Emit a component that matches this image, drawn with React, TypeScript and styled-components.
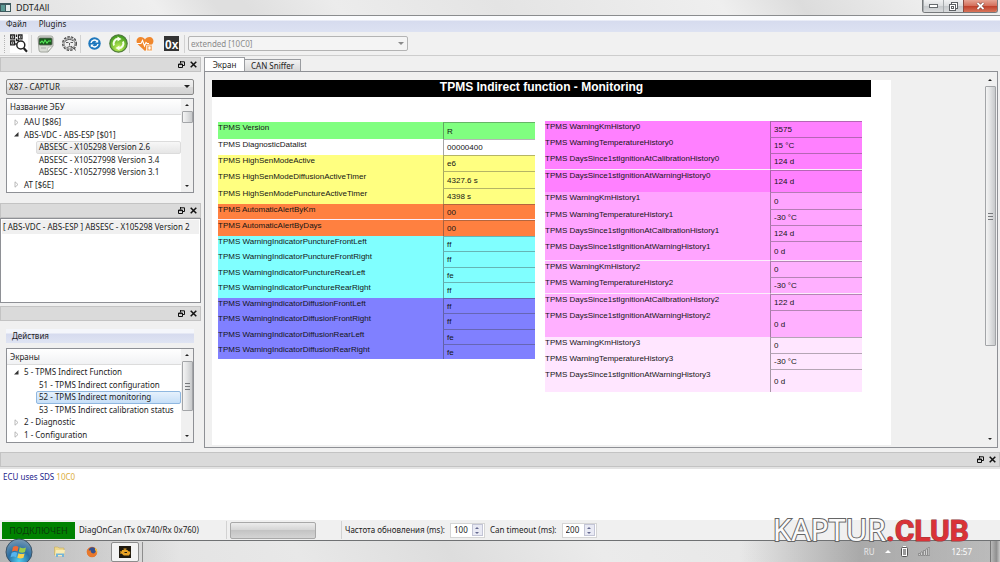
import React from "react";
import styled, { createGlobalStyle, css } from "styled-components";

const Global = createGlobalStyle`
  * { box-sizing: border-box; }
  body { margin: 0; background: #f0f0f0; }
  body, button, input, select {
    font-family: "Noto Sans", "Open Sans", sans-serif;
    font-size: 8px;
    line-height: 12px;
    color: #1c1c1c;
  }
  button { background: none; border: 0; padding: 0; margin: 0; }
  ul, h1 { margin: 0; padding: 0; list-style: none; }
`;

const Window = styled.div`
  position: relative;
  display: flex;
  flex-direction: column;
  min-height: 100vh;
  overflow: hidden;
`;

const TitleBar = styled.header`
  display: flex;
  align-items: center;
  gap: 5px;
  height: 16px;
  font-size: 9px;
  border-bottom: 1px solid #8a8c8e;
  background: linear-gradient(55deg, #e4e4e4 0 4%, #efefef 16%, #dfdfdf 22% 25%, #ececec 34%, #e4e4e4 50%, #efefef 72%, #dcdcdc 80%, #ededed 92%);
`;

const CaptionButtons = styled.div`
  display: flex;
  align-self: flex-start;
  margin: 0 2px 0 auto;
  height: 13px;
  border: 1px solid #76797c;
  border-top: 0;
  border-radius: 0 0 3px 3px;
  overflow: hidden;
`;

const CaptionButton = styled.button<{ $close?: boolean }>`
  display: flex;
  align-items: center;
  justify-content: center;
  width: ${(p) => (p.$close ? 34 : 20)}px;
  border-left: ${(p) => (p.$close ? "1px solid #8b4a40" : "1px solid #a7abae")};
  background: ${(p) =>
    p.$close
      ? "linear-gradient(#e6a494, #d4705c 48%, #c0402b 52%, #d8745a)"
      : "linear-gradient(#f0f1f2, #dcdee0 48%, #c6c9cc 52%, #d9dbdd)"};
`;

const MenuBar = styled.nav`
  display: flex;
  gap: 12px;
  height: 16px;
  padding: 1px 6px;
  background: linear-gradient(#fbfcfe 0 4px, #d6dbee 5px, #dde2f2);
`;

const ToolBar = styled.div`
  display: flex;
  align-items: center;
  height: 24px;
  padding: 0 4px;
  border-bottom: 1px solid #cdcdcd;
  background: #f1f1f1;
`;

const Grip = styled.span`
  width: 2px;
  height: 18px;
  border-left: 1px dotted #b5b5b5;
`;

const Separator = styled.span`
  width: 1px;
  height: 18px;
  background: #d2d2d2;
`;

const ToolButton = styled.button<{ $w: number }>`
  display: flex;
  align-items: center;
  justify-content: center;
  width: ${(p) => p.$w}px;
  height: 22px;
`;

const ComboWrap = styled.div<{ $w?: number }>`
  position: relative;
  width: ${(p) => (p.$w ? `${p.$w}px` : "100%")};
  ${(p) => p.$w && css`margin-left: 3px;`}
  svg { position: absolute; right: 4px; top: 6px; pointer-events: none; }
`;

const Combo = styled.select`
  display: block;
  appearance: none;
  width: 100%;
  height: 16px;
  padding: 0 2px;
  border: 1px solid #8a8a8a;
  border-radius: 2px;
  background: linear-gradient(#f1f1f1, #e8e8e8 48%, #dadada 52%, #d2d2d2);
  &:disabled {
    height: 15px;
    color: #8b8b8b;
    opacity: 1;
    border-color: #b4b4b4;
    background: #f4f4f4;
  }
`;

const Main = styled.main`
  display: flex;
  flex: 1;
  padding: 1px 2px 4px 0;
`;

const Sidebar = styled.aside`
  display: flex;
  flex-direction: column;
  width: 201px;
  margin-right: 3px;
`;

const Dock = styled.section<{ $grow?: boolean }>`
  display: flex;
  flex-direction: column;
  ${(p) => p.$grow && css`flex: 1;`}
`;

const DockTitle = styled.div`
  display: flex;
  align-items: center;
  justify-content: flex-end;
  gap: 5px;
  height: 15px;
  padding: 0 3px;
  border: 1px solid #c3c3c3;
  background: #dadada;
  button { display: flex; }
`;

const DockBody = styled.div<{ $gap: number; $bottom: number }>`
  display: flex;
  flex-direction: column;
  gap: ${(p) => p.$gap}px;
  padding: 7px 7px ${(p) => p.$bottom}px 6px;
`;

const TreeBox = styled.div`
  display: flex;
  height: 95px;
  border: 1px solid #8e9095;
  background: #fff;
`;

const TreeMain = styled.div`
  display: flex;
  flex-direction: column;
  flex: 1;
  min-width: 0;
`;

const TreeHeader = styled.div`
  height: 16px;
  padding: 2px 3px;
  border-bottom: 1px solid #dcdcdc;
  background: linear-gradient(#fff, #f1f2f4);
`;

const TreeList = styled.ul`
  display: grid;
  grid-auto-rows: 1fr;
  flex: 1;
  padding: 1px 0;
`;

const TreeItem = styled.li<{ $level: number }>`
  display: flex;
  align-items: center;
  padding-left: ${(p) => (p.$level ? 29 : 6)}px;
`;

const Twisty = styled.svg`
  flex: none;
  width: 8px;
  height: 7px;
`;

const TreeLabel = styled.button<{ $state?: "soft" | "active" }>`
  flex: 1;
  height: 100%;
  padding: 0 2px;
  border: 1px solid transparent;
  border-radius: 2px;
  line-height: 10px;
  text-align: left;
  white-space: nowrap;
  ${(p) => p.$state === "soft" && css`background: linear-gradient(#f7f7f7, #e6e6e6); border-color: #dcdcdc;`}
  ${(p) => p.$state === "active" && css`background: linear-gradient(#e6f1fc, #c6dff8); border-color: #8fb7e0;`}
`;

const ScrollTrack = styled.div`
  display: flex;
  flex-direction: column;
  align-items: center;
  width: 12px;
  background: #f0f0f0;
  button { display: flex; align-items: center; justify-content: center; width: 12px; height: 12px; }
`;

const ScrollThumb = styled.div<{ $size: string }>`
  display: flex;
  align-items: center;
  justify-content: center;
  width: 11px;
  height: ${(p) => p.$size};
  border: 1px solid #a3a5a8;
  border-radius: 1px;
  background: linear-gradient(90deg, #f4f4f4, #e2e3e4 45%, #c7c9cb);
`;

const ScrollFiller = styled.div`
  flex: 1;
`;

const EcuList = styled.ul`
  flex: 1;
  margin-bottom: 3px;
  padding: 1px;
  border: 1px solid #8e9095;
  background: #fff;
  li {
    height: 14px;
    padding: 1px;
    background: #f0f0f0;
    white-space: nowrap;
    overflow: hidden;
  }
`;

const ActionMenu = styled.div`
  height: 14px;
  margin-top: 1px;
  padding: 1px 6px;
  background: linear-gradient(#f4f6fb 0 4px, #d6dbee 5px, #dfe4f3);
`;

const Workspace = styled.div`
  display: flex;
  flex-direction: column;
  flex: 1;
  min-width: 0;
`;

const Tabs = styled.div`
  display: flex;
  align-items: flex-end;
  height: 15px;
  margin-bottom: -1px;
`;

const Tab = styled.button<{ $active?: boolean; $w: number }>`
  width: ${(p) => p.$w}px;
  height: ${(p) => (p.$active ? 15 : 13)}px;
  border: 1px solid #9a9ca0;
  border-left-width: ${(p) => (p.$active ? 1 : 0)}px;
  border-bottom-color: ${(p) => (p.$active ? "#fff" : "#9a9ca0")};
  background: ${(p) => (p.$active ? "#fff" : "linear-gradient(#f2f2f2, #e6e6e6 48%, #d8d8d8)")};
`;

const TabPanel = styled.div`
  display: flex;
  flex: 1;
  padding: 2px 1px 2px 2px;
  border: 1px solid #8e9095;
  background: #f0f0f0;
`;

const CanvasArea = styled.div`
  display: grid;
  grid-template-columns: 679fr 93fr;
  flex: 1;
  margin: 6px 0 0 5px;
`;

const Canvas = styled.div`
  background: #fff;
`;

const Banner = styled.h1`
  height: 17px;
  margin-right: 20px;
  background: #000;
  color: #fff;
  font: bold 12px/15px "Liberation Sans", Arial, sans-serif;
  text-align: center;
`;

const TableGrid = styled.div`
  display: grid;
  grid-template-columns: 1fr 1fr;
  align-items: start;
  gap: 10px;
  padding: 24px 29px 0 6px;
`;

const DataTable = styled.table<{ $low?: boolean }>`
  width: 100%;
  margin-top: ${(p) => (p.$low ? 1 : 0)}px;
  border-collapse: separate;
  border-spacing: 0;
  table-layout: fixed;
  font: 8px/10px "Liberation Sans", Arial, sans-serif;
  color: #151515;
`;

const DataRow = styled.tr<{ $h: number; $bg: string; $gap?: boolean }>`
  height: ${(p) => p.$h}px;
  background: ${(p) => p.$bg};
  th, td { padding: 0; text-align: left; font-weight: normal; white-space: nowrap; }
  th {
    width: 71%;
    padding-top: 1px;
    vertical-align: top;
    border-bottom: ${(p) => (p.$gap ? "1px solid #fbeefb" : "0")};
  }
  td {
    padding: 1px 0 0 3px;
    vertical-align: middle;
    border-top: 1px solid rgba(60, 60, 60, 0.38);
    border-left: 1px solid rgba(60, 60, 60, 0.45);
    border-bottom: ${(p) => (p.$gap ? "1px solid #fbeefb" : "0")};
  }
`;

const Log = styled.div`
  height: 53px;
  padding: 2px 3px;
  border-top: 2px solid #e3e3e3;
  background: #fff;
  color: #24248c;
  em { font-style: normal; color: #dcae3c; }
`;

const StatusBar = styled.footer`
  display: flex;
  align-items: center;
  height: 20px;
  padding: 0 2px;
  background: #f0f0f0;
  white-space: nowrap;
`;

const Connected = styled.div`
  width: 73px;
  height: 17px;
  margin-right: 4px;
  background: #008200;
  color: #0b3a0b;
  font-size: 9px;
  line-height: 17px;
  text-align: center;
`;

const CanInfo = styled.span`
  width: 147px;
`;

const Progress = styled.div`
  width: 86px;
  height: 17px;
  margin: 0 25px 0 3px;
  border: 1px solid #a8a8a8;
  border-radius: 2px;
  background: linear-gradient(#ececec, #d6d6d6 45%, #c4c4c4 50%, #d4d4d4);
`;

const SpinLabel = styled.label`
  padding: 0 5px 0 3px;
`;

const SpinBox = styled.span`
  display: flex;
  align-items: center;
  height: 15px;
  margin-right: 2px;
  padding: 1px;
  border: 1px solid #d5d5d5;
  background: #fff;
  input {
    width: 20px;
    height: 11px;
    padding: 0 0 0 2px;
    border: 0;
    background: none;
    appearance: textfield;
    &::-webkit-inner-spin-button { appearance: none; }
  }
`;

const SpinButtons = styled.span`
  display: flex;
  flex-direction: column;
  width: 11px;
  border: 1px solid #c3c5d6;
  background: #e9eaf4;
  button { display: flex; justify-content: center; align-items: center; height: 5px; }
`;

const TaskBar = styled.div`
  display: flex;
  align-items: center;
  height: 22px;
  border-top: 1px solid #6f7173;
  background:
    linear-gradient(90deg, rgba(150, 150, 150, 0.55), rgba(170, 170, 170, 0.35) 10%, transparent 18% 74%, rgba(120, 120, 120, 0.55) 86%, rgba(150, 150, 150, 0.5)),
    linear-gradient(60deg, #dedede, #e8e8e8 30%, #dddddd 45%, #ebebeb 60%, #e2e2e2);
`;

const StartButton = styled.button`
  width: 28px;
  height: 28px;
  margin: 0 18px 0 5px;
  flex: none;
  svg { display: block; }
`;

const TaskButton = styled.button<{ $active?: boolean }>`
  display: flex;
  align-items: center;
  justify-content: center;
  width: ${(p) => (p.$active ? 28 : 16)}px;
  height: 20px;
  margin-right: ${(p) => (p.$active ? 0 : 17)}px;
  ${(p) => p.$active && css`margin-left: -6px; border: 1px solid #8d8d8d; border-radius: 2px; background: #f3f3f3;`}
`;

const StackEdge = styled.span`
  width: 4px;
  height: 20px;
  border-right: 1px solid #8d8d8d;
`;

const Tray = styled.div`
  display: flex;
  align-items: center;
  gap: 10px;
  height: 21px;
  margin-left: auto;
  color: #fff;
`;

const Lang = styled.span`
  color: #e9e9e9;
`;

const Clock = styled.time`
  margin: 0 8px 0 12px;
`;

const ShowDesktop = styled.button`
  width: 10px;
  height: 21px;
  border-left: 1px solid #777;
  background: linear-gradient(90deg, #b9b9b9, #8f8f8f 60%, #c9c9c9);
`;

const Watermark = styled.div`
  position: absolute;
  right: 31px;
  bottom: 13px;
  font: 30px/36px "Noto Sans", sans-serif;
  color: #fafafa;
  -webkit-text-stroke: 2px #666;
  paint-order: stroke fill;
  pointer-events: none;
  strong {
    font: bold 30px/36px Roboto, sans-serif;
    color: #da3237;
    -webkit-text-stroke: 1px #8c3a3c;
  }
`;

const Caret = ({ up, color = "#222", w = 6 }: { up?: boolean; color?: string; w?: number }) => (
  <svg width={w} height={w / 2} viewBox="0 0 6 3" aria-hidden="true">
    <path d={up ? "M0 3L3 0L6 3Z" : "M0 0H6L3 3Z"} fill={color} />
  </svg>
);

const DockHeading = () => (
  <DockTitle>
    <button aria-label="Float">
      <svg width="7" height="7" viewBox="0 0 7 7" fill="none" stroke="#111">
        <path d="M2 .8H6.5V4.5H5M2.5 0V2.5" />
        <path d="M.5 3H4.5V6.5H.5ZM.5 3.6H4.5" />
      </svg>
    </button>
    <button aria-label="Close">
      <svg width="7" height="7" viewBox="0 0 7 7" stroke="#111" strokeWidth="1.5">
        <path d="M.7.7L6.3 6.3M6.3.7L.7 6.3" />
      </svg>
    </button>
  </DockTitle>
);

const ScrollBar = ({ size, ticks }: { size: string; ticks?: boolean }) => (
  <ScrollTrack>
    <button aria-label="Scroll up"><Caret up w={4} /></button>
    <ScrollThumb $size={size}>
      {ticks && (
        <svg width="5" height="7" viewBox="0 0 5 7" stroke="#77797c">
          <path d="M0 .5H5M0 3.5H5M0 6.5H5" />
        </svg>
      )}
    </ScrollThumb>
    <ScrollFiller />
    <button aria-label="Scroll down"><Caret w={4} /></button>
  </ScrollTrack>
);

type Node = { text: string; level: number; open?: boolean; state?: "soft" | "active" };

const Tree = ({ title, nodes, thumb, ticks }: { title: string; nodes: Node[]; thumb: string; ticks?: boolean }) => (
  <TreeBox>
    <TreeMain>
      <TreeHeader>{title}</TreeHeader>
      <TreeList>
        {nodes.map((n) => (
          <TreeItem key={n.text} $level={n.level}>
            {n.level === 0 && (
              <Twisty viewBox="0 0 8 7">
                {n.open ? <path d="M5.5 1V5.5H1Z" fill="#333" /> : <path d="M2 .8L5 3.5L2 6.2Z" fill="#fff" stroke="#aaa" strokeWidth=".8" />}
              </Twisty>
            )}
            <TreeLabel $state={n.state}>{n.text}</TreeLabel>
          </TreeItem>
        ))}
      </TreeList>
    </TreeMain>
    <ScrollBar size={thumb} ticks={ticks} />
  </TreeBox>
);

const ecus: Node[] = [
  { text: "AAU [$86]", level: 0 },
  { text: "ABS-VDC - ABS-ESP [$01]", level: 0, open: true },
  { text: "ABSESC - X105298 Version 2.6", level: 1, state: "soft" },
  { text: "ABSESC - X10527998 Version 3.4", level: 1 },
  { text: "ABSESC - X10527998 Version 3.1", level: 1 },
  { text: "AT [$6E]", level: 0 },
];

const screens: Node[] = [
  { text: "5 - TPMS Indirect Function", level: 0, open: true },
  { text: "51 - TPMS Indirect configuration", level: 1 },
  { text: "52 - TPMS Indirect monitoring", level: 1, state: "active" },
  { text: "53 - TPMS Indirect calibration status", level: 1 },
  { text: "2 - Diagnostic", level: 0 },
  { text: "1 - Configuration", level: 0 },
];

type Row = [label: string, value: string, height: number, color: string, gap?: boolean];

const GREEN = "#80ff80";
const YELLOW = "#ffff80";
const ORANGE = "#ff8040";
const CYAN = "#80ffff";
const BLUE = "#8080ff";
const PINK0 = "#ff80ff";
const PINK1 = "#ffa4ff";
const PINK2 = "#ffb0ff";
const PINK3 = "#ffe6ff";

const statusRows: Row[] = [
  ["Version", "R", 17, GREEN],
  ["DiagnosticDatalist", "00000400", 16, "#ffffff"],
  ["HighSenModeActive", "e6", 16, YELLOW],
  ["HighSenModeDiffusionActiveTimer", "4327.6 s", 17, YELLOW],
  ["HighSenModePunctureActiveTimer", "4398 s", 16, YELLOW],
  ["AutomaticAlertByKm", "00", 16, ORANGE, true],
  ["AutomaticAlertByDays", "00", 16, ORANGE],
  ["WarningIndicatorPunctureFrontLeft", "ff", 15, CYAN],
  ["WarningIndicatorPunctureFrontRight", "ff", 16, CYAN],
  ["WarningIndicatorPunctureRearLeft", "fe", 15, CYAN],
  ["WarningIndicatorPunctureRearRight", "ff", 16, CYAN],
  ["WarningIndicatorDiffusionFrontLeft", "ff", 15, BLUE],
  ["WarningIndicatorDiffusionFrontRight", "ff", 16, BLUE],
  ["WarningIndicatorDiffusionRearLeft", "fe", 15, BLUE],
  ["WarningIndicatorDiffusionRearRight", "fe", 15, BLUE],
];

const historyRows: Row[] = [
  ["WarningKmHistory0", "3575", 16, PINK0],
  ["WarningTemperatureHistory0", "15 °C", 16, PINK0],
  ["DaysSince1stIgnitionAtCalibrationHistory0", "124 d", 17, PINK0, true],
  ["DaysSince1stIgnitionAtWarningHistory0", "124 d", 22, PINK0],
  ["WarningKmHistory1", "0", 17, PINK1],
  ["WarningTemperatureHistory1", "-30 °C", 16, PINK1],
  ["DaysSince1stIgnitionAtCalibrationHistory1", "124 d", 16, PINK1],
  ["DaysSince1stIgnitionAtWarningHistory1", "0 d", 20, PINK1, true],
  ["WarningKmHistory2", "0", 16, PINK2],
  ["WarningTemperatureHistory2", "-30 °C", 17, PINK2, true],
  ["DaysSince1stIgnitionAtCalibrationHistory2", "122 d", 16, PINK2],
  ["DaysSince1stIgnitionAtWarningHistory2", "0 d", 27, PINK2],
  ["WarningKmHistory3", "0", 16, PINK3],
  ["WarningTemperatureHistory3", "-30 °C", 16, PINK3],
  ["DaysSince1stIgnitionAtWarningHistory3", "0 d", 23, PINK3],
];

const Readings = ({ rows, low }: { rows: Row[]; low?: boolean }) => (
  <DataTable $low={low}>
    <tbody>
      {rows.map(([label, value, h, bg, gap]) => (
        <DataRow key={label} $h={h} $bg={bg} $gap={gap}>
          <th scope="row">TPMS {label}</th>
          <td>{value}</td>
        </DataRow>
      ))}
    </tbody>
  </DataTable>
);

const Spin = ({ id, label, value }: { id: string; label: string; value: number }) => (
  <>
    <SpinLabel htmlFor={id}>{label}</SpinLabel>
    <SpinBox>
      <input id={id} type="number" defaultValue={value} />
      <SpinButtons>
        <button aria-label="Increase"><Caret up w={4} color="#666a90" /></button>
        <button aria-label="Decrease"><Caret w={4} color="#666a90" /></button>
      </SpinButtons>
    </SpinBox>
  </>
);

const ScanIcon = () => (
  <svg width="18" height="19" viewBox="0 0 18 19">
    <rect width="18" height="19" fill="#fff" />
    <g fill="none" stroke="#222" strokeWidth="1.300">
      <path d="M.7 1H4.500V4.800H.7ZM.7 7H4.500V10.800H.7Z" />
      <path d="M8.500 1H12V4.800H8.500ZM6.500 .5V3M6.500 4.500V6.500H9" />
      <path d="M2 3H3.300M2 9H3.300M10 3H11M6 9V11" />
      <circle cx="10.800" cy="11" r="4" fill="#fff" strokeWidth="1.500" />
      <path d="M13.600 14L17 17.700" strokeWidth="2.200" />
    </g>
  </svg>
);

const MonitorIcon = () => (
  <svg width="18" height="18" viewBox="0 0 18 18">
    <path d="M1 3Q1 1 3 1H14Q16 1 16 3V11L11 17H4Q2 17 2 15Z" fill="#d9dcd6" stroke="#a2a69e" />
    <rect x="2" y="3" width="13" height="7" rx="1" fill="#1b5a1e" stroke="#5b5f59" strokeWidth=".8" />
    <path d="M3 8L5 6L6.500 8L8 5L10 8L11.500 6H14" fill="none" stroke="#58e85a" strokeWidth="1.100" />
    <path d="M10 17L11 12.500L16 11Z" fill="#f7f7f5" stroke="#a9aca6" strokeWidth=".6" />
    <path d="M4 13H9" stroke="#aaa" />
  </svg>
);

const ExpertIcon = () => (
  <svg width="17" height="17" viewBox="0 0 17 17" fill="none" stroke="#4d4d4d">
    <circle cx="8.500" cy="8.500" r="6.800" strokeWidth="1.400" strokeDasharray="2.500 1.200" />
    <circle cx="8.500" cy="8.500" r="5.500" fill="#ededed" strokeWidth=".7" />
    <path d="M4 6.500Q8 2.500 12.500 6M5 7.500H7.500M9.500 7.500H12M8.500 8V10.500M6 12.500Q9 10.500 11 12.500M10 11L15 15.500" strokeWidth=".9" />
  </svg>
);

const RefreshIcon = () => (
  <svg width="13" height="13" viewBox="0 0 13 13">
    <circle cx="6.500" cy="6.500" r="6.200" fill="#1f78bd" />
    <path d="M3 6A3.500 3.500 0 0 1 9 4.200M10 7A3.500 3.500 0 0 1 4 8.800" fill="none" stroke="#fff" strokeWidth="1.400" />
    <path d="M10.200 2.500V5.600H7.200ZM2.800 10.500V7.400H5.800Z" fill="#fff" />
  </svg>
);

const GreenIcon = () => (
  <svg width="19" height="19" viewBox="0 0 19 19">
    <defs>
      <radialGradient id="lime" cx=".5" cy=".75" r=".7">
        <stop offset="0" stopColor="#c6f25c" />
        <stop offset="1" stopColor="#3f9a1d" />
      </radialGradient>
    </defs>
    <circle cx="9.500" cy="9.500" r="8.700" fill="url(#lime)" stroke="#4f7a3c" strokeWidth="1.200" />
    <path d="M5 11.500A4.800 4.800 0 0 1 9 4.800M14 7.500A4.800 4.800 0 0 1 10 14.200" fill="none" stroke="#f6ffe9" strokeWidth="2" />
    <path d="M8.500 2.500L12.500 5L8.500 7.500ZM10.500 16.500L6.500 14L10.500 11.500Z" fill="#f6ffe9" />
  </svg>
);

const HeartIcon = () => (
  <svg width="18" height="16" viewBox="0 0 18 16">
    <path d="M9 15L2 8.500C-1 5 1 1 4.500 1C6.800 1 8.200 2 9 3.500C9.800 2 11.200 1 13.500 1C17 1 19 5 16 8.500Z" fill="#f0872c" />
    <path d="M1 7.500H5L6.500 4.500L8.500 10L10 6.500L11 7.500H13" fill="none" stroke="#fff" strokeWidth="1.100" />
    <rect x="10.500" y="9" width="6" height="6" rx="1" fill="#f7b273" stroke="#fff" strokeWidth=".7" />
    <path d="M13.500 10.500V13.500M12 12H15" stroke="#fff" />
  </svg>
);

const HexIcon = () => (
  <svg width="15" height="15" viewBox="0 0 15 15">
    <rect width="15" height="15" fill="#333" />
    <text x="1" y="13" fontFamily="Liberation Sans, sans-serif" fontSize="12" fontWeight="bold" fill="#fff">0x</text>
  </svg>
);

const StartOrb = () => (
  <svg width="28" height="28" viewBox="0 0 28 28">
    <defs>
      <radialGradient id="orb" cx=".5" cy=".85" r=".85">
        <stop offset="0" stopColor="#4fd0f0" />
        <stop offset=".5" stopColor="#2a6ea2" />
        <stop offset="1" stopColor="#7a9ab4" />
      </radialGradient>
    </defs>
    <circle cx="14" cy="14" r="13" fill="url(#orb)" stroke="#3c5468" />
    <path d="M8 9Q11 7 13.500 9L12.500 13.500Q10 12 7 13.500Z" fill="#ee6a35" />
    <path d="M14.800 9.300Q18 11 21 9.500L20 14Q17 15.500 13.800 13.800Z" fill="#9ccc4a" />
    <path d="M6.700 14.800Q9.500 13.200 12.200 14.800L11 19.300Q8.500 17.800 5.500 19.300Z" fill="#56b4ee" />
    <path d="M13.500 15.200Q16.500 16.800 19.600 15.400L18.500 19.800Q15.500 21.200 12.300 19.800Z" fill="#fbd04b" />
  </svg>
);

const FolderIcon = () => (
  <svg width="13" height="13" viewBox="0 0 13 13">
    <path d="M1.500 2H5L6 3H11V10H1.500Z" fill="#eed88c" stroke="#c5ab5c" strokeWidth=".6" />
    <path d="M3 5H12L11 11H2Z" fill="#f8ebb4" />
    <path d="M3 12V8.500H11V12H9V10H5V12Z" fill="#75b5d8" />
  </svg>
);

const FirefoxIcon = () => (
  <svg width="12" height="12" viewBox="0 0 12 12">
    <circle cx="6" cy="6" r="5.200" fill="#e3702a" />
    <circle cx="6.300" cy="4.800" r="3.500" fill="#34518f" />
    <path d="M1 3Q2 5 5 4.500Q4 7 8 7.500Q10 7 10.500 4Q12 8 8.500 10.500Q4 12 1.500 8.500Q.3 6 1 3Z" fill="#e8792c" />
    <path d="M9 1.500Q12 4 11 8Q10.500 5 9 4Z" fill="#f6bd3b" />
  </svg>
);

const EngineIcon = () => (
  <svg width="12" height="12" viewBox="0 0 12 12">
    <rect width="12" height="12" fill="#1f1a10" />
    <path d="M3.500 4.500H8L9.500 6V9H5L3.500 7.500Z" fill="#e9a325" />
    <path d="M5.500 6.500H8" stroke="#1f1a10" />
    <path d="M2 5V8M2 6.500H3.500M3.500 4.500H8L9.500 6V9H5L3.500 7.500ZM4.500 3H7.500M6 3V4.500M10.500 5.500V8.500" fill="none" stroke="#e9a325" strokeWidth="1.200" />
  </svg>
);

export default function App() {
  return (
    <>
      <Global />
      <Window>
        <TitleBar>
          <svg width="11" height="9" viewBox="0 0 11 9">
            <rect width="11" height="9" fill="#3d5a5e" />
            <rect x="1" y="2" width="4" height="6" fill="#5b9a94" />
            <rect x="6" y="2" width="4" height="6" fill="#e4eceb" />
          </svg>
          <span>DDT4All</span>
          <CaptionButtons>
            <CaptionButton aria-label="Minimize">
              <svg width="9" height="4" viewBox="0 0 9 4"><rect x=".5" y=".5" width="8" height="3" fill="#fff" stroke="#666a6e" /></svg>
            </CaptionButton>
            <CaptionButton aria-label="Restore">
              <svg width="9" height="9" viewBox="0 0 9 9" fill="#fff" stroke="#5c6064">
                <rect x="2.500" y=".5" width="6" height="6" />
                <rect x=".5" y="2.500" width="6" height="6" />
                <rect x="2.500" y="4.500" width="2" height="2" />
              </svg>
            </CaptionButton>
            <CaptionButton $close aria-label="Close">
              <svg width="9" height="8" viewBox="0 0 9 8">
                <path d="M1.500 1L7.500 7M7.500 1L1.500 7" stroke="#6b3a34" strokeWidth="3" />
                <path d="M1.500 1L7.500 7M7.500 1L1.500 7" stroke="#fff" strokeWidth="1.800" />
              </svg>
            </CaptionButton>
          </CaptionButtons>
        </TitleBar>
        <MenuBar>
          <button>Файл</button>
          <button>Plugins</button>
        </MenuBar>
        <ToolBar>
          <Grip />
          <ToolButton $w={25} aria-label="Scan"><ScanIcon /></ToolButton>
          <Separator />
          <ToolButton $w={27} aria-label="Live monitor"><MonitorIcon /></ToolButton>
          <ToolButton $w={21} aria-label="Expert mode"><ExpertIcon /></ToolButton>
          <Separator />
          <ToolButton $w={27} aria-label="Refresh"><RefreshIcon /></ToolButton>
          <ToolButton $w={21} aria-label="Auto refresh"><GreenIcon /></ToolButton>
          <Separator />
          <ToolButton $w={29} aria-label="Diagnose"><HeartIcon /></ToolButton>
          <ToolButton $w={25} aria-label="Hex"><HexIcon /></ToolButton>
          <Separator />
          <ComboWrap $w={220}>
            <Combo disabled aria-label="Session"><option>extended [10C0]</option></Combo>
            <Caret color="#8a8a8a" />
          </ComboWrap>
        </ToolBar>
        <Main>
          <Sidebar>
            <Dock>
              <DockHeading />
              <DockBody $gap={3} $bottom={10}>
                <ComboWrap>
                  <Combo aria-label="Vehicle"><option>X87 - CAPTUR</option></Combo>
                  <Caret />
                </ComboWrap>
                <Tree title="Название ЭБУ" nodes={ecus} thumb="12px" />
              </DockBody>
            </Dock>
            <Dock $grow>
              <DockHeading />
              <EcuList><li>[ ABS-VDC - ABS-ESP ] ABSESC - X105298 Version 2</li></EcuList>
            </Dock>
            <Dock>
              <DockHeading />
              <DockBody $gap={5} $bottom={5}>
                <ActionMenu>Действия</ActionMenu>
                <Tree title="Экраны" nodes={screens} thumb="50px" ticks />
              </DockBody>
            </Dock>
          </Sidebar>
          <Workspace>
            <Tabs>
              <Tab $active $w={41}>Экран</Tab>
              <Tab $w={56}>CAN Sniffer</Tab>
            </Tabs>
            <TabPanel>
              <CanvasArea>
                <Canvas>
                  <Banner>TPMS Indirect function - Monitoring</Banner>
                  <TableGrid>
                    <Readings rows={statusRows} low />
                    <Readings rows={historyRows} />
                  </TableGrid>
                </Canvas>
              </CanvasArea>
              <ScrollBar size="260px" ticks />
            </TabPanel>
          </Workspace>
        </Main>
        <DockHeading />
        <Log>ECU uses SDS <em>10C0</em></Log>
        <StatusBar>
          <Connected>ПОДКЛЮЧЕН</Connected>
          <CanInfo>DiagOnCan (Tx 0x740/Rx 0x760)</CanInfo>
          <Separator />
          <Progress />
          <Separator />
          <Spin id="rate" label="Частота обновления (ms):" value={100} />
          <Spin id="timeout" label="Can timeout (ms):" value={200} />
        </StatusBar>
        <TaskBar>
          <StartButton aria-label="Start"><StartOrb /></StartButton>
          <TaskButton aria-label="Explorer"><FolderIcon /></TaskButton>
          <TaskButton aria-label="Firefox"><FirefoxIcon /></TaskButton>
          <TaskButton $active aria-label="DDT4All"><EngineIcon /></TaskButton>
          <StackEdge />
          <Tray>
            <Lang>RU</Lang>
            <Caret up color="#fff" />
            <svg width="7" height="11" viewBox="0 0 7 11" fill="none" stroke="#fff">
              <rect x=".5" y="1.500" width="6" height="9" rx="1" stroke="#555" fill="#fff" />
              <rect x="2" y="3" width="3" height="6" fill="#999" stroke="none" />
              <path d="M2 .5H5" />
            </svg>
            <svg width="12" height="9" viewBox="0 0 12 9" fill="#fff" stroke="#666" strokeWidth=".6">
              <path d="M.5 6.500H2V8.500H.5ZM3 5H4.500V8.500H3ZM5.500 3.500H7V8.500H5.500ZM8 2H9.500V8.500H8ZM10.200.5H11.600V8.500H10.200Z" />
            </svg>
            <Clock>12:57</Clock>
            <ShowDesktop aria-label="Show desktop" />
          </Tray>
        </TaskBar>
        <Watermark>KAPTUR<strong>.CLUB</strong></Watermark>
      </Window>
    </>
  );
}
